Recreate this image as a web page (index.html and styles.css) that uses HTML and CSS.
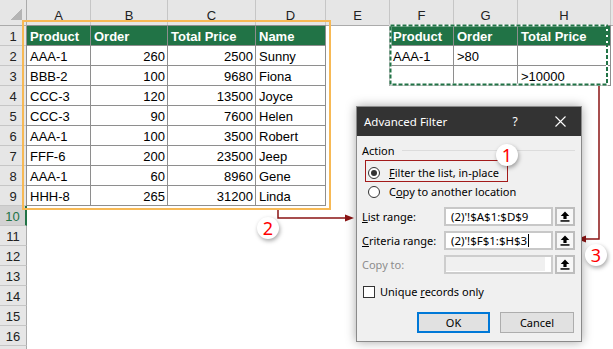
FILE: index.html
```html
<!DOCTYPE html>
<html lang="en">
<head>
  <meta charset="UTF-8">
  <title>Advanced Filter</title>
  <link rel="stylesheet" href="styles.css">
</head>
<body>
<div class="screen">

  <div class="sheet">
    <div class="corner"></div>
    <div class="ch">A</div><div class="ch">B</div><div class="ch">C</div><div class="ch">D</div>
    <div class="ch">E</div><div class="ch">F</div><div class="ch">G</div><div class="ch">H</div><div class="ch"></div>

    <div class="rh">1</div>
    <div class="c d h a">Product</div><div class="c d h">Order</div><div class="c d h">Total Price</div><div class="c d h">Name</div>
    <div class="c e"></div>
    <div class="c d h">Product</div><div class="c d h">Order</div><div class="c d h">Total Price</div><div class="c"></div>

    <div class="rh">2</div>
    <div class="c d a">AAA-1</div><div class="c d n">260</div><div class="c d n">2500</div><div class="c d">Sunny</div>
    <div class="c e"></div>
    <div class="c d">AAA-1</div><div class="c d">&gt;80</div><div class="c d"></div><div class="c"></div>

    <div class="rh">3</div>
    <div class="c d a">BBB-2</div><div class="c d n">100</div><div class="c d n">9680</div><div class="c d">Fiona</div>
    <div class="c e"></div>
    <div class="c d"></div><div class="c d"></div><div class="c d">&gt;10000</div><div class="c"></div>

    <div class="rh">4</div>
    <div class="c d a">CCC-3</div><div class="c d n">120</div><div class="c d n">13500</div><div class="c d">Joyce</div><div class="c rest"></div>

    <div class="rh">5</div>
    <div class="c d a">CCC-3</div><div class="c d n">90</div><div class="c d n">7600</div><div class="c d">Helen</div><div class="c rest"></div>

    <div class="rh">6</div>
    <div class="c d a">AAA-1</div><div class="c d n">100</div><div class="c d n">3500</div><div class="c d">Robert</div><div class="c rest"></div>

    <div class="rh">7</div>
    <div class="c d a">FFF-6</div><div class="c d n">200</div><div class="c d n">23500</div><div class="c d">Jeep</div><div class="c rest"></div>

    <div class="rh">8</div>
    <div class="c d a">AAA-1</div><div class="c d n">60</div><div class="c d n">8960</div><div class="c d">Gene</div><div class="c rest"></div>

    <div class="rh">9</div>
    <div class="c d a">HHH-8</div><div class="c d n">265</div><div class="c d n">31200</div><div class="c d">Linda</div><div class="c rest"></div>

    <div class="rh sel">10</div><div class="c full"></div>
    <div class="rh">11</div><div class="c full"></div>
    <div class="rh">12</div><div class="c full"></div>
    <div class="rh">13</div><div class="c full"></div>
    <div class="rh">14</div><div class="c full"></div>
    <div class="rh">15</div><div class="c full"></div>
    <div class="rh">16</div><div class="c full"></div>
    <div class="rh"></div><div class="c full"></div>
  </div>

  <!-- marks drawn over the sheet -->
  <div class="list-mark"></div>
  <svg class="marks" width="613" height="349" viewBox="0 0 613 349">
    <rect x="390.5" y="25.5" width="216.5" height="59" fill="none" stroke="#fff" stroke-width="2"/>
    <rect x="390.5" y="25.5" width="216.5" height="59" fill="none" stroke="#217346" stroke-width="2" stroke-dasharray="4 2"/>
    <polyline points="278,210 278,218 347,218" fill="none" stroke="#8b1414" stroke-width="1.5"/>
    <polygon points="354,218 345,214.5 345,221.5" fill="#8b1414"/>
    <polyline points="599,86 599,239 585,239" fill="none" stroke="#8b1414" stroke-width="1.5"/>
    <polygon points="577,239 586,235.5 586,242.5" fill="#8b1414"/>
  </svg>

  <div class="dlg">
    <div class="dlg-title">
      <span class="dlg-name">Advanced Filter</span>
      <span class="dlg-help">?</span>
      <span class="dlg-close">
        <svg width="11" height="11" viewBox="0 0 11 11"><path d="M0.5 0.5 L10.5 10.5 M10.5 0.5 L0.5 10.5" stroke="#fff" stroke-width="1.1"/></svg>
      </span>
    </div>
    <div class="dlg-body">
      <div class="group"><span>Action</span><i></i></div>
      <div class="radio"><span class="dot on"></span><span><u>F</u>ilter the list, in-place</span></div>
      <div class="radio"><span class="dot"></span><span>C<u>o</u>py to another location</span></div>

      <div class="field">
        <span class="lbl"><u>L</u>ist range:</span>
        <span class="box">(2)'!$A$1:$D$9</span>
        <span class="pick"><svg width="10" height="11" viewBox="0 0 10 11"><path d="M5 0.5 L9.3 5 H6.6 V8 H3.4 V5 H0.7 Z" fill="#000"/><rect x="0.5" y="9.2" width="9" height="1.5" fill="#000"/></svg></span>
      </div>
      <div class="field">
        <span class="lbl"><u>C</u>riteria range:</span>
        <span class="box">(2)'!$F$1:$H$3<i class="caret"></i></span>
        <span class="pick"><svg width="10" height="11" viewBox="0 0 10 11"><path d="M5 0.5 L9.3 5 H6.6 V8 H3.4 V5 H0.7 Z" fill="#000"/><rect x="0.5" y="9.2" width="9" height="1.5" fill="#000"/></svg></span>
      </div>
      <div class="field off">
        <span class="lbl">Copy to:</span>
        <span class="box"></span>
        <span class="pick"><svg width="10" height="11" viewBox="0 0 10 11"><path d="M5 0.5 L9.3 5 H6.6 V8 H3.4 V5 H0.7 Z" fill="#000"/><rect x="0.5" y="9.2" width="9" height="1.5" fill="#000"/></svg></span>
      </div>

      <div class="check"><span class="tick"></span><span>Unique <u>r</u>ecords only</span></div>

      <div class="btns">
        <button class="btn ok">OK</button>
        <button class="btn">Cancel</button>
      </div>
    </div>
    <div class="hl-box"></div>
  </div>

  <div class="num n1">1</div>
  <div class="num n2">2</div>
  <div class="num n3">3</div>
</div>
</body>
</html>
```

FILE: styles.css
```css
* {
  box-sizing: border-box;
}

body {
  margin: 0;
  background: #fff;
}

.screen {
  position: relative;
  width: 613px;
  height: 349px;
  overflow: hidden;
  background: #fff;
  font-family: "Liberation Sans", Arial, sans-serif;
  font-size: 13px;
  color: #000;
}

/* ---------- sheet ---------- */

.sheet {
  display: grid;
  grid-template-columns: 27px 64px 77px 88px 70px 64px 64px 64px 93px 1fr;
  grid-template-rows: 26px;
  grid-auto-rows: 20px;
}

.corner {
  background: linear-gradient(to bottom right, transparent 50%, #b4b4b4 50%) no-repeat right 4px bottom 5px / 11px 11px, #e6e6e6;
  border-right: 1px solid #ababab;
  border-bottom: 1px solid #ababab;
}

.ch {
  background: #e6e6e6;
  border-right: 1px solid #c6c6c6;
  border-bottom: 1px solid #ababab;
  display: flex;
  align-items: flex-end;
  justify-content: center;
  line-height: 16px;
  padding-bottom: 1px;
  color: #222;
}

.rh {
  background: #e6e6e6;
  border-right: 1px solid #ababab;
  border-bottom: 1px solid #c6c6c6;
  text-align: center;
  line-height: 18px;
  padding-top: 2px;
  color: #222;
}

.rh.sel {
  background: #d2d2d2;
  color: #217346;
  border-right: 2px solid #217346;
}

.c {
  line-height: 18px;
  padding: 2px 2px 0 3px;
  white-space: nowrap;
  overflow: hidden;
}

.d {
  border-right: 1px solid #8e8e8e;
  border-bottom: 1px solid #8e8e8e;
}

.a {
  box-shadow: -1px 0 0 #8e8e8e;
}

.e {
  border-right: 1px solid #8e8e8e;
}

.h {
  background: #217346;
  color: #fff;
  font-weight: bold;
  box-shadow: 0 -1px 0 #8e8e8e;
}

.h.a {
  box-shadow: -1px 0 0 #8e8e8e, 0 -1px 0 #8e8e8e;
}

.n {
  text-align: right;
}

.rest {
  grid-column: span 5;
}

.full {
  grid-column: span 9;
}

/* ---------- marks ---------- */

.list-mark {
  position: absolute;
  left: 22px;
  top: 20px;
  width: 309px;
  height: 190px;
  border: 2px solid #f7b955;
}

.marks {
  position: absolute;
  left: 0;
  top: 0;
}

.num {
  position: absolute;
  width: 22px;
  height: 22px;
  border-radius: 50%;
  background: #fff;
  box-shadow: 1px 2px 4px rgba(0, 0, 0, 0.35);
  color: #f00;
  font-family: "Noto Sans", sans-serif;
  font-size: 18px;
  line-height: 22px;
  text-align: center;
}

.n1 { left: 496px; top: 144px; }
.n2 { left: 257px; top: 217px; }
.n3 { left: 585px; top: 244px; }

/* ---------- dialog ---------- */

.dlg {
  position: absolute;
  left: 356px;
  top: 106px;
  width: 226px;
  height: 236px;
  background: #f0f0f0;
  border: 1px solid #8a8a8a;
  box-shadow: 0 0 10px rgba(0, 0, 0, 0.35);
  font-family: "Noto Sans", sans-serif;
  font-size: 11px;
  color: #000;
}

.dlg-title {
  height: 29px;
  background: #333;
  color: #fff;
  display: flex;
  align-items: center;
  padding-left: 7px;
  font-size: 11.5px;
}

.dlg-name {
  flex: 1;
}

.dlg-help {
  width: 20px;
  text-align: center;
  font-size: 12px;
}

.dlg-close {
  width: 30px;
  margin-left: 20px;
  margin-right: 6px;
  display: flex;
  justify-content: center;
}

.dlg-body {
  padding: 6px 6px 0 5px;
}

.group {
  display: flex;
  align-items: center;
  height: 16px;
}

.group i {
  flex: 1;
  height: 1px;
  background: #dcdcdc;
  margin-left: 7px;
}

.radio {
  display: flex;
  align-items: center;
  height: 19px;
  padding-left: 6px;
  gap: 9px;
}

.group + .radio {
  margin-top: 5px;
}

.dot {
  width: 12px;
  height: 12px;
  border: 1px solid #333;
  border-radius: 50%;
  background: #fff;
  display: flex;
  align-items: center;
  justify-content: center;
}

.dot.on::after {
  content: "";
  width: 6px;
  height: 6px;
  border-radius: 50%;
  background: #333;
}

.field {
  display: flex;
  align-items: center;
  height: 19px;
  margin-top: 5px;
}

.radio + .field {
  margin-top: 6px;
}

.lbl {
  width: 82px;
}

.box {
  width: 109px;
  height: 19px;
  border: 2px solid #c8c8c8;
  background: #fff;
  padding-left: 5px;
  line-height: 15px;
  font-size: 11.5px;
  display: flex;
  align-items: center;
}

.caret {
  width: 1px;
  height: 13px;
  background: #000;
  margin-left: 1px;
}

.pick {
  width: 20px;
  height: 19px;
  margin-left: 2px;
  border: 2px solid #bdbdbd;
  background: #f7f7f7;
  display: flex;
  align-items: center;
  justify-content: center;
}

.field.off .lbl {
  color: #8d8d8d;
}

.field.off .box {
  background: #f0f0f0;
  border-color: #cdcdcd;
  box-shadow: inset -6px 0 0 #fff, inset 0 -1px 0 #fff;
}

.check {
  display: flex;
  align-items: center;
  height: 19px;
  margin-top: 8px;
  gap: 5px;
}

.tick {
  width: 12px;
  height: 12px;
  margin-left: 1px;
  border: 1px solid #333;
  background: #fff;
}

.btns {
  display: flex;
  justify-content: flex-end;
  gap: 10px;
  margin-top: 11px;
  padding-right: 1px;
}

.btn {
  height: 21px;
  width: 74px;
  background: #e1e1e1;
  border: 1px solid #adadad;
  font-family: "Noto Sans", sans-serif;
  font-size: 11px;
  color: #000;
  padding: 0;
}

.btn.ok {
  width: 73px;
  border: 2px solid #0078d7;
}

.hl-box {
  position: absolute;
  left: 8px;
  top: 53px;
  width: 143px;
  height: 22px;
  border: 1.5px solid #a31a1a;
}
```
